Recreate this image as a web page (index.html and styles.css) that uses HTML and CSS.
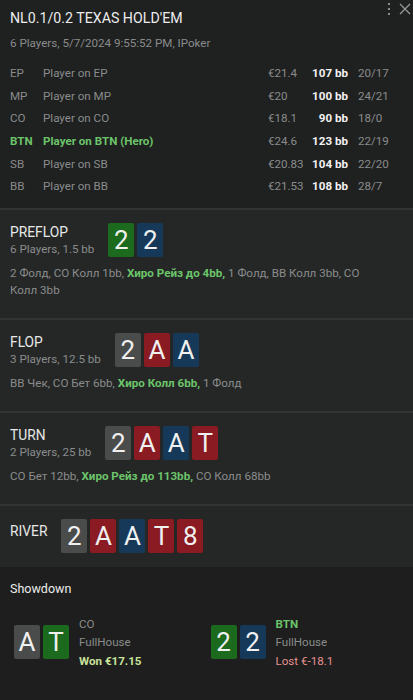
FILE: index.html
```html
<!DOCTYPE html>
<html lang="ru">
<head>
    <meta charset="UTF-8">
    <meta name="viewport" content="width=device-width, initial-scale=1.0">
    <title>NL0.1/0.2 Texas Hold'em</title>
    <link rel="stylesheet" href="styles.css">
</head>
<body>
    <div class="hand">
        <!-- Кнопки окна -->
        <div class="window-btns">
            <span class="kebab"><i></i><i></i><i></i></span>
            <svg class="close" width="12" height="12" viewBox="0 0 12 12">
                <path d="M1 1 L11 11 M11 1 L1 11" stroke="#9a9a9a" stroke-width="1.2" fill="none"/>
            </svg>
        </div>

        <!-- Заголовок -->
        <header class="top">
            <h1>NL0.1/0.2 TEXAS HOLD'EM</h1>
            <p class="sub">6 Players, 5/7/2024 9:55:52 PM, IPoker</p>

            <div class="players">
                <div class="row"><span>EP</span><span>Player on EP</span><span>€21.4</span><b>107 bb</b><span class="stat">20/17</span></div>
                <div class="row"><span>MP</span><span>Player on MP</span><span>€20</span><b>100 bb</b><span class="stat">24/21</span></div>
                <div class="row"><span>CO</span><span>Player on CO</span><span>€18.1</span><b>90 bb</b><span class="stat">18/0</span></div>
                <div class="row hero"><span>BTN</span><span>Player on BTN (Hero)</span><span>€24.6</span><b>123 bb</b><span class="stat">22/19</span></div>
                <div class="row"><span>SB</span><span>Player on SB</span><span>€20.83</span><b>104 bb</b><span class="stat">22/20</span></div>
                <div class="row"><span>BB</span><span>Player on BB</span><span>€21.53</span><b>108 bb</b><span class="stat">28/7</span></div>
            </div>
        </header>

        <!-- Улицы -->
        <section class="street">
            <div class="street-head">
                <div>
                    <h2>PREFLOP</h2>
                    <p class="sub">6 Players, 1.5 bb</p>
                </div>
                <div class="cards">
                    <span class="card green">2</span>
                    <span class="card blue">2</span>
                </div>
            </div>
            <p class="actions">2 Фолд, CO Колл 1bb, <b>Хиро Рейз до 4bb,</b> 1 Фолд, BB Колл 3bb, CO<br>Колл 3bb</p>
        </section>

        <section class="street">
            <div class="street-head">
                <div>
                    <h2>FLOP</h2>
                    <p class="sub">3 Players, 12.5 bb</p>
                </div>
                <div class="cards">
                    <span class="card gray">2</span>
                    <span class="card red">A</span>
                    <span class="card blue">A</span>
                </div>
            </div>
            <p class="actions">BB Чек, CO Бет 6bb, <b>Хиро Колл 6bb,</b> 1 Фолд</p>
        </section>

        <section class="street">
            <div class="street-head">
                <div>
                    <h2>TURN</h2>
                    <p class="sub">2 Players, 25 bb</p>
                </div>
                <div class="cards">
                    <span class="card gray">2</span>
                    <span class="card red">A</span>
                    <span class="card blue">A</span>
                    <span class="card red">T</span>
                </div>
            </div>
            <p class="actions">CO Бет 12bb, <b>Хиро Рейз до 113bb,</b> CO Колл 68bb</p>
        </section>

        <section class="street river">
            <div class="street-head">
                <div>
                    <h2>RIVER</h2>
                </div>
                <div class="cards">
                    <span class="card gray">2</span>
                    <span class="card red">A</span>
                    <span class="card blue">A</span>
                    <span class="card red">T</span>
                    <span class="card red">8</span>
                </div>
            </div>
        </section>

        <!-- Вскрытие -->
        <section class="showdown">
            <h3>Showdown</h3>
            <div class="showdown-hands">
                <div class="sd-hand">
                    <div class="cards">
                        <span class="card gray">A</span>
                        <span class="card green">T</span>
                    </div>
                    <div class="sd-info">
                        <div>CO</div>
                        <div>FullHouse</div>
                        <div class="won">Won €17.15</div>
                    </div>
                </div>
                <div class="sd-hand">
                    <div class="cards">
                        <span class="card green">2</span>
                        <span class="card blue">2</span>
                    </div>
                    <div class="sd-info">
                        <div class="hero-pos">BTN</div>
                        <div>FullHouse</div>
                        <div class="lost">Lost €-18.1</div>
                    </div>
                </div>
            </div>
        </section>
    </div>
</body>
</html>
```

FILE: styles.css
```css
/* Сброс */
* {
    margin: 0;
    padding: 0;
    box-sizing: border-box;
}

body {
    background-color: #1f2020;
    color: #e6e6e6;
    font-family: Roboto, "Noto Sans", sans-serif;
    font-size: 11.6px;
}

.hand {
    position: relative;
    width: 413px;
    height: 700px;
    overflow: hidden;
}

/* Кнопки окна */
.window-btns {
    position: absolute;
    top: 3px;
    right: 2px;
    display: flex;
    align-items: center;
    gap: 9px;
}

.kebab {
    display: flex;
    flex-direction: column;
    gap: 3px;
}

.kebab i {
    display: block;
    width: 2px;
    height: 2px;
    background-color: #8a8a8a;
}

/* Заголовок */
.top {
    padding: 8px 10px 10px;
}

.top h1 {
    font-size: 14.2px;
    font-weight: normal;
    line-height: 20px;
    color: #ececec;
}

.sub {
    color: #8a8c8c;
    line-height: 16px;
}

.top .sub {
    margin-top: 7px;
}

.players {
    margin-top: 11px;
}

.row {
    display: grid;
    grid-template-columns: 33px 1fr 40px 40px 55px;
    height: 22.6px;
    align-items: center;
    color: #8a8c8c;
}

.row b {
    color: #f2f2f2;
    text-align: right;
}

.row .stat {
    padding-left: 10px;
}

.row.hero span:nth-child(1),
.row.hero span:nth-child(2) {
    color: #6cc46a;
    font-weight: bold;
}

/* Улицы */
.street {
    background-color: #252727;
    border-top: 2px solid #323434;
    padding: 13px 10px 19px;
}

.street-head {
    display: flex;
    align-items: center;
    gap: 14px;
}

.street h2 {
    font-size: 13.8px;
    font-weight: normal;
    line-height: 18px;
    color: #e8e8e8;
}

.cards {
    display: flex;
    gap: 3px;
}

.card {
    display: flex;
    align-items: center;
    justify-content: center;
    width: 26px;
    height: 34px;
    border-radius: 2px;
    font-size: 26px;
    color: #f0f0f0;
}

.card.green { background-color: #1c6a1d; }
.card.blue { background-color: #163959; }
.card.red { background-color: #8a1b22; }
.card.gray { background-color: #4a4b4b; }

.actions {
    margin-top: 8px;
    color: #8a8c8c;
    line-height: 17px;
}

.actions b {
    color: #6cc46a;
}

.river {
    padding-bottom: 14px;
}

.river h2 {
    margin-top: -10px;
}

/* Вскрытие */
.showdown {
    background-color: #1d1e1d;
    padding: 14px 10px;
    height: 100%;
}

.showdown h3 {
    font-size: 12.5px;
    font-weight: normal;
    line-height: 16px;
    color: #ececec;
}

.showdown-hands {
    display: grid;
    grid-template-columns: 1fr 1fr;
    margin-top: 18px;
}

.sd-hand {
    display: flex;
    align-items: center;
    gap: 10px;
    padding-left: 4px;
}

.sd-info {
    line-height: 18.5px;
    color: #8a8c8c;
}

.won {
    color: #c9e29a;
    font-weight: bold;
}

.lost {
    color: #e59190;
}

.hero-pos {
    color: #6cc46a;
    font-weight: bold;
}
```
